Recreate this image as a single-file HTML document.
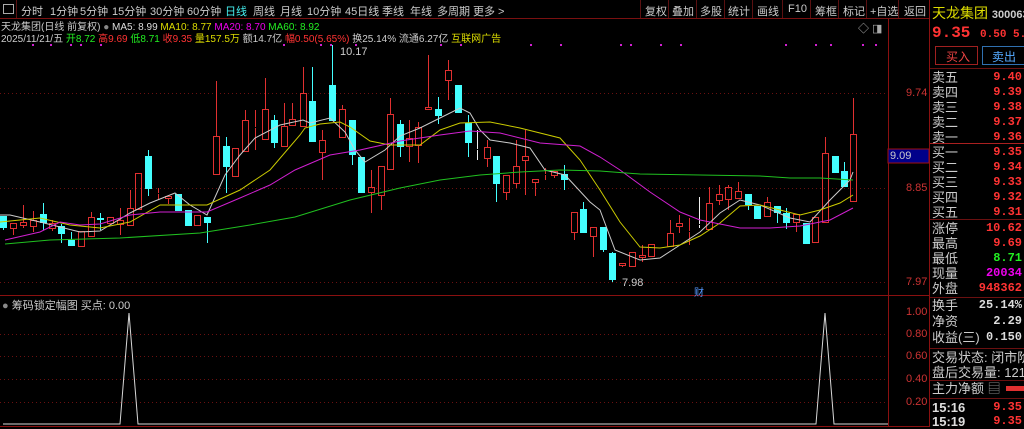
<!DOCTYPE html>
<html><head><meta charset="utf-8"><style>
*{margin:0;padding:0;box-sizing:border-box}
body{width:1024px;height:427px;background:#000;overflow:hidden;position:relative;font-family:"Liberation Sans","Noto Sans CJK SC",sans-serif;font-size:12px;color:#ccc}
.a{position:absolute;white-space:nowrap}
.t{position:absolute;top:3px;font-size:11px;color:#ccc;white-space:nowrap}
.rp .r{position:absolute;left:932px;width:92px;height:15px;font-size:13px;line-height:15px;white-space:nowrap;overflow:hidden}
.rp .r b{position:absolute;right:2px;font-weight:bold;font-family:"Liberation Mono",monospace;font-size:12px}
</style></head><body>
<svg class="a" style="left:0;top:0" width="1024" height="427" xmlns="http://www.w3.org/2000/svg">
<line x1="0" y1="18.5" x2="930" y2="18.5" stroke="#7a1010"/>
<line x1="888.5" y1="19" x2="888.5" y2="427" stroke="#8a1010"/>
<line x1="929.5" y1="0" x2="929.5" y2="427" stroke="#8a1010"/>
<line x1="0" y1="295.5" x2="929" y2="295.5" stroke="#8a1010"/>
<line x1="0" y1="426.5" x2="929" y2="426.5" stroke="#8a1010"/>
<g stroke="#6a1010" stroke-dasharray="1,3">
<line x1="0" y1="93.5" x2="888" y2="93.5"/><line x1="0" y1="188.5" x2="888" y2="188.5"/><line x1="0" y1="282.5" x2="888" y2="282.5"/>
<line x1="0" y1="334.5" x2="888" y2="334.5"/><line x1="0" y1="356.5" x2="888" y2="356.5"/><line x1="0" y1="379.5" x2="888" y2="379.5"/><line x1="0" y1="402.5" x2="888" y2="402.5"/>
</g>
<g stroke="#5a1010"><line x1="16.5" y1="0" x2="16.5" y2="18"/><line x1="640.5" y1="0" x2="640.5" y2="18"/><line x1="668.5" y1="0" x2="668.5" y2="18"/><line x1="696.5" y1="0" x2="696.5" y2="18"/><line x1="724.5" y1="0" x2="724.5" y2="18"/><line x1="752.5" y1="0" x2="752.5" y2="18"/><line x1="782.5" y1="0" x2="782.5" y2="18"/><line x1="810.5" y1="0" x2="810.5" y2="18"/><line x1="838.5" y1="0" x2="838.5" y2="18"/><line x1="866.5" y1="0" x2="866.5" y2="18"/><line x1="898.5" y1="0" x2="898.5" y2="18"/></g>
<rect x="888" y="149" width="41" height="14" fill="#00008a" stroke="#a01010"/>
<g stroke="#6a1010"><line x1="930" y1="143.5" x2="1024" y2="143.5" stroke="#aa2020"/><line x1="930" y1="219.5" x2="1024" y2="219.5"/><line x1="930" y1="297.5" x2="1024" y2="297.5"/><line x1="930" y1="348.5" x2="1024" y2="348.5"/><line x1="930" y1="380.5" x2="1024" y2="380.5"/><line x1="930" y1="398.5" x2="1024" y2="398.5"/><line x1="930" y1="68.5" x2="1024" y2="68.5"/></g>
<rect x="935.5" y="46.5" width="42" height="18" fill="none" stroke="#a02020"/>
<rect x="982.5" y="46.5" width="42" height="18" fill="none" stroke="#3070b0"/>
<rect x="1006" y="386" width="18" height="5" fill="#e03030"/>
<rect x="3.5" y="4.5" width="10" height="9" fill="none" stroke="#aaa"/>
<g id="c"></g>
<polyline fill="none" stroke="#d8d8d8" points="3,424 120,424 129,313 138,424 816,424 825,313 834,424 888,424"/>
</svg>
<div class="t" style="left:21px">分时</div><div class="t" style="left:50px">1分钟</div><div class="t" style="left:80px">5分钟</div><div class="t" style="left:112px">15分钟</div><div class="t" style="left:150px">30分钟</div><div class="t" style="left:187px">60分钟</div><div class="t" style="left:225px;color:#4ee">日线</div><div class="t" style="left:253px">周线</div><div class="t" style="left:280px">月线</div><div class="t" style="left:307px">10分钟</div><div class="t" style="left:345px">45日线</div><div class="t" style="left:382px">季线</div><div class="t" style="left:410px">年线</div><div class="t" style="left:437px">多周期</div><div class="t" style="left:473px">更多 &gt;</div>
<div class="t" style="left:645px">复权</div><div class="t" style="left:672px">叠加</div><div class="t" style="left:700px">多股</div><div class="t" style="left:728px">统计</div><div class="t" style="left:757px">画线</div><div class="t" style="left:788px">F10</div><div class="t" style="left:815px">筹框</div><div class="t" style="left:843px">标记</div><div class="t" style="left:870px">+自选</div><div class="t" style="left:904px">返回</div>
<div class="a" style="left:1px;top:18px;font-size:10px"><span style="color:#ccc">天龙集团(日线 前复权) </span><span style="color:#888">●</span> <span style="color:#ddd">MA5: 8.99</span> <span style="color:#dd0">MA10: 8.77</span> <span style="color:#e0e">MA20: 8.70</span> <span style="color:#2e2">MA60: 8.92</span></div>
<div class="a" style="left:1px;top:30px;font-size:10px;color:#ccc">2025/11/21/五 <span style="color:#2e2">开8.72</span> <span style="color:#f33">高9.69</span> <span style="color:#2e2">低8.71</span> <span style="color:#f33">收9.35</span> <span style="color:#dd0">量157.5万</span> 额14.7亿 <span style="color:#f33">幅0.50(5.65%)</span> 换25.14% 流通6.27亿 <span style="color:#dd0">互联网广告</span></div>
<div class="a" style="left:340px;top:46px;font-size:11px;color:#ccc">10.17</div>
<div class="a" style="left:622px;top:277px;font-size:11px;color:#ccc">7.98</div>
<div class="a" style="left:694px;top:284px;font-size:10px;color:#59f">财</div>
<div class="a" style="left:858px;top:20px;font-size:11px;color:#aaa">◇ ◨</div>
<div class="a" style="left:906px;top:87px;font-size:11px;color:#c33">9.74</div>
<div class="a" style="left:906px;top:182px;font-size:11px;color:#c33">8.85</div>
<div class="a" style="left:906px;top:276px;font-size:11px;color:#c33">7.97</div>
<div class="a" style="left:890px;top:150px;font-size:11px;color:#ccc">9.09</div>
<div class="a" style="left:906px;top:306px;font-size:11px;color:#c33">1.00</div>
<div class="a" style="left:906px;top:328px;font-size:11px;color:#c33">0.80</div>
<div class="a" style="left:906px;top:350px;font-size:11px;color:#c33">0.60</div>
<div class="a" style="left:906px;top:373px;font-size:11px;color:#c33">0.40</div>
<div class="a" style="left:906px;top:396px;font-size:11px;color:#c33">0.20</div>
<div class="a" style="left:2px;top:297px;font-size:11px;color:#ccc"><span style="color:#888">●</span> 筹码锁定幅图 买点: 0.00</div>
<div class="rp">
<div class="a" style="left:932px;top:3px;font-size:14px;color:#dd0">天龙集团 <span style="font-size:11px;color:#ccc;font-weight:bold">300063</span></div>
<div class="a" style="left:932px;top:24px;font-size:16px;color:#f33;font-weight:bold;font-family:'Liberation Mono',monospace">9.35 <span style="font-size:11px">0.50 5.65</span></div>
<div class="a" style="left:946px;top:48px;font-size:12px;color:#e44">买入</div>
<div class="a" style="left:992px;top:48px;font-size:12px;color:#5af">卖出</div>
<div class="r" style="top:70px">卖五<b style="color:#f33">9.40</b></div>
<div class="r" style="top:85px">卖四<b style="color:#f33">9.39</b></div>
<div class="r" style="top:100px">卖三<b style="color:#f33">9.38</b></div>
<div class="r" style="top:115px">卖二<b style="color:#f33">9.37</b></div>
<div class="r" style="top:130px">卖一<b style="color:#f33">9.36</b></div>
<div class="r" style="top:145px">买一<b style="color:#f33">9.35</b></div>
<div class="r" style="top:160px">买二<b style="color:#f33">9.34</b></div>
<div class="r" style="top:175px">买三<b style="color:#f33">9.33</b></div>
<div class="r" style="top:190px">买四<b style="color:#f33">9.32</b></div>
<div class="r" style="top:205px">买五<b style="color:#f33">9.31</b></div>
<div class="r" style="top:221px">涨停<b style="color:#f33">10.62</b></div>
<div class="r" style="top:236px">最高<b style="color:#f33">9.69</b></div>
<div class="r" style="top:251px">最低<b style="color:#2e2">8.71</b></div>
<div class="r" style="top:266px">现量<b style="color:#e0e">20034</b></div>
<div class="r" style="top:281px">外盘<b style="color:#f33">948362</b></div>
<div class="r" style="top:298px">换手<b style="color:#ddd">25.14%</b></div>
<div class="r" style="top:314px">净资<b style="color:#ddd">2.29</b></div>
<div class="r" style="top:330px">收益(三)<b style="color:#ddd">0.150</b></div>
<div class="r" style="top:350px">交易状态: 闭市阶</div>
<div class="r" style="top:365px">盘后交易量: 121</div>
<div class="r" style="top:381px">主力净额 <span style="color:#888">▤</span></div>
<div class="r" style="top:400px;font-weight:bold;color:#ddd">15:16<b style="color:#f33">9.35</b></div>
<div class="r" style="top:414px;font-weight:bold;color:#ddd">15:19<b style="color:#f33">9.35</b></div>
</div>
<script>
var C=[
[3,216,228,216,230,'c'],[13,223,229,223,235,'r'],[23,222,226,205,228,'r'],[33,220,227,211,232,'r'],[43,214,223,203,230,'c'],[52,223,229,220,231,'r'],[61,226,234,224,243,'c'],[71,240,246,232,246,'c'],[81,231,247,231,247,'r'],[91,217,237,212,237,'r'],[100,218,220,213,230,'c'],[110,217,224,217,224,'r'],[120,220,225,208,235,'r'],[130,208,226,190,226,'r'],[138,173,210,173,210,'r'],[148,156,189,150,196,'c'],[158,193,194,188,200,'r'],[168,196,199,196,204,'r'],[178,194,211,194,211,'c'],[188,210,226,210,226,'c'],[197,215,226,215,226,'r'],[207,217,223,217,243,'c'],[216,136,175,81,175,'r'],[226,146,167,137,193,'c'],[235,148,177,148,177,'r'],[245,120,152,110,152,'r'],[255,127,128,110,150,'r'],[265,109,140,78,140,'r'],[274,120,143,115,148,'c'],[284,126,147,103,147,'r'],[292,119,126,103,126,'r'],
[303,93,127,67,127,'r'],[312,101,142,67,142,'c'],[322,140,153,130,180,'r'],[332,85,121,45,121,'c'],[342,109,138,105,138,'r'],[352,120,155,120,165,'c'],[361,157,193,157,193,'c'],[371,187,193,170,213,'r'],[381,166,196,166,210,'r'],[390,114,170,98,170,'r'],[400,124,147,120,157,'c'],[409,138,147,120,162,'r'],[418,127,146,122,163,'r'],[428,107,110,55,110,'r'],[438,109,116,97,124,'c'],[448,70,81,60,100,'r'],[458,85,113,85,113,'c'],[468,123,143,115,157,'c'],[477,149,150,130,160,'w'],[487,147,159,140,167,'r'],[496,156,184,156,202,'c'],[506,175,193,175,200,'r'],[516,166,184,140,188,'r'],[525,156,161,130,195,'r'],[535,179,183,179,196,'r'],[545,174,175,168,180,'r'],[554,171,176,171,178,'r'],[564,174,180,165,190,'c'],[574,212,233,212,240,'r'],[583,209,233,202,233,'c'],[593,227,237,227,257,'r'],
[603,227,250,227,252,'c'],[612,253,280,252,282,'c'],[622,263,266,263,267,'r'],[632,252,267,252,267,'r'],[642,255,258,245,262,'r'],[651,244,257,244,257,'r'],[661,246,247,246,247,'r'],[670,233,247,220,247,'r'],[679,223,227,215,233,'r'],[689,231,232,218,245,'r'],[699,224,225,197,228,'w'],[709,203,230,187,230,'r'],[719,194,201,185,205,'r'],[728,187,200,185,210,'r'],[738,191,199,182,199,'r'],[748,194,205,194,210,'c'],[757,206,219,206,219,'c'],[767,202,217,197,217,'r'],[777,206,213,206,223,'c'],[786,213,223,208,229,'c'],[796,214,223,214,232,'r'],[806,223,244,223,244,'c'],[815,217,243,217,243,'r'],[825,153,223,137,223,'r'],[835,156,173,156,173,'c'],[844,171,187,162,187,'c'],[853,134,202,98,202,'r']];
var h='';
C.forEach(function(k){var x=k[0],t=k[1],b=k[2],hi=k[3],lo=k[4],c=k[5];
if(c=='c'){h+='<line x1="'+(x+.5)+'" y1="'+hi+'" x2="'+(x+.5)+'" y2="'+lo+'" stroke="#4ff"/><rect x="'+(x-3)+'" y="'+t+'" width="7" height="'+Math.max(b-t,1)+'" fill="#4ff"/>';}
else{var col=c=='w'?'#eee':'#e03030';h+='<line x1="'+(x+.5)+'" y1="'+hi+'" x2="'+(x+.5)+'" y2="'+t+'" stroke="'+col+'"/><line x1="'+(x+.5)+'" y1="'+b+'" x2="'+(x+.5)+'" y2="'+lo+'" stroke="'+col+'"/><rect x="'+(x-2.5)+'" y="'+(t+.5)+'" width="6" height="'+Math.max(b-t-1,0)+'" fill="none" stroke="'+col+'"/>';}});
var L=[['#ccc','0,215 10,215 40,222 80,232 100,231 130,213 150,203 175,193 190,205 207,215 225,175 240,155 255,138 280,125 303,120 310,123 330,118 345,132 355,150 365,162 385,150 400,136 420,128 440,118 460,108 470,113 480,130 490,140 510,143 530,148 545,170 565,175 590,202 600,210 615,250 640,260 660,258 680,245 700,232 720,213 740,200 760,205 790,218 810,222 830,200 850,180 853,172'],
['#cc0','0,222 40,218 70,225 100,228 130,222 160,205 180,205 207,205 240,190 270,170 300,135 305,128 320,124 340,122 350,127 370,141 390,145 420,145 440,130 460,123 490,122 520,128 560,138 580,160 600,190 620,222 640,247 660,248 680,245 700,236 720,223 740,206 760,205 780,210 800,215 820,210 840,203 853,195'],
['#d020d0','5,240 40,232 60,222 80,225 100,224 130,215 160,212 207,212 240,198 270,185 295,170 330,155 360,150 400,141 440,135 470,131 500,133 540,143 580,146 600,157 620,170 650,192 680,212 700,220 740,228 770,228 800,226 830,220 853,208'],
['#20c020','5,244 50,240 120,238 200,233 250,225 295,217 350,200 400,188 440,180 480,175 520,172 560,170 600,171 640,174 700,175 760,176 790,178 820,178 853,180']];
L.forEach(function(l){h+='<polyline fill="none" stroke="'+l[0]+'" points="'+l[1]+'"/>';});
[32,50,70,80,100,283,320,330,355,440,460,530,560,620,630,660,680,785,815,830,862,875].forEach(function(x){h+='<rect x="'+x+'" y="44" width="2" height="2" fill="#d020d0"/>';});
document.getElementById('c').innerHTML=h;
</script>
</body></html>
